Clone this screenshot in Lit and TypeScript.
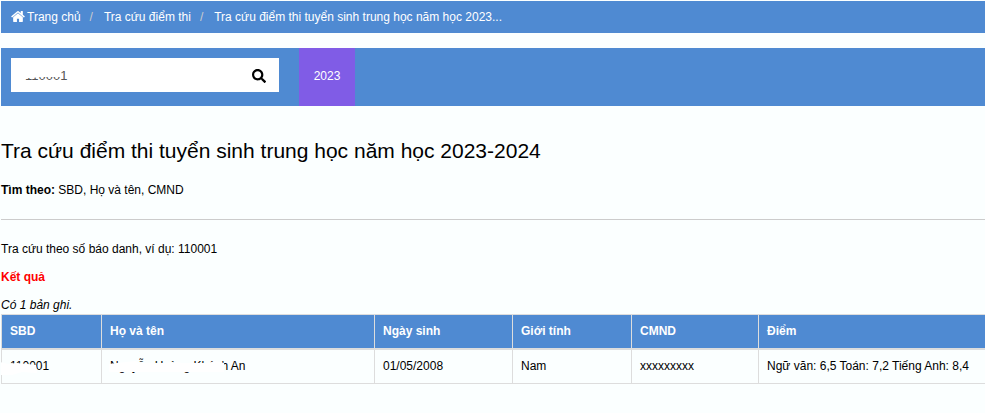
import { LitElement, html, css, svg } from 'lit';
import { customElement, property, state } from 'lit/decorators.js';

interface ICrumb {
    label: string;
    home?: boolean;
}

interface IRecord {
    id: string;
    name: string;
    birthday: string;
    gender: string;
    cmnd: string;
    score: string;
}

const homeIcon = svg`<path d="M1472 992v480q0 26-19 45t-45 19h-384v-384h-256v384h-384q-26 0-45-19t-19-45v-480q0-1 .5-3t.5-3l575-474 575 474q1 2 1 6zm223-69l-62 74q-8 9-21 11h-3q-13 0-21-7l-692-577-692 577q-12 8-24 7-13-2-21-11l-62-74q-8-10-7-23.5t11-21.5l719-599q32-26 76-26t76 26l244 204v-195q0-14 9-23t23-9h192q14 0 23 9t9 23v408l219 182q10 8 11 21.5t-7 23.5z" />`;

const searchIcon = svg`<path d="M505 442.7L405.3 343c-4.5-4.5-10.6-7-17-7H372c27.6-35.3 44-79.7 44-128C416 93.1 322.9 0 208 0S0 93.1 0 208s93.1 208 208 208c48.3 0 92.7-16.4 128-44v16.3c0 6.4 2.5 12.5 7 17l99.7 99.7c9.4 9.4 24.6 9.4 33.9 0l28.3-28.3c9.4-9.4 9.4-24.6.1-34zM208 336c-70.7 0-128-57.2-128-128 0-70.7 57.2-128 128-128 70.7 0 128 57.2 128 128 0 70.7-57.2 128-128 128z" />`;

@customElement('score-breadcrumb')
export class ScoreBreadcrumb extends LitElement {
    static override styles = css`
        :host {
            display: block;
            background: #4f8ad2;
        }
        .list {
            display: flex;
            margin: 0;
            padding: 8px 10px 7px;
            list-style: none;
            line-height: 17px;
        }
        .item + .item::before {
            content: '/';
            padding: 0 11px 0 9px;
            color: #ccc;
        }
        .link {
            color: #fff;
            text-decoration: none;
        }
        .icon {
            width: 14px;
            height: 11px;
            margin-right: 2px;
            vertical-align: -1px;
            fill: currentColor;
        }
    `;

    @property({ attribute: false }) crumbs: ICrumb[] = [];

    override render() {
        return html`
            <nav>
                <ol class="list">
                    ${this.crumbs.map(
                        (c) => html`<li class="item"><a class="link" href="#">${c.home
                            ? html`<svg class="icon" viewBox="64 256 1664 1280" aria-hidden="true">${homeIcon}</svg>`
                            : null}${c.label}</a></li>`,
                    )}
                </ol>
            </nav>
        `;
    }
}

@customElement('score-search')
export class ScoreSearch extends LitElement {
    static override styles = css`
        :host {
            display: flex;
            background: #4f8ad2;
        }
        .form {
            position: relative;
            display: flex;
            width: 268px;
            height: 34px;
            margin: 10px 20px 14px 10px;
            background: #fff;
        }
        .input {
            flex: 1;
            min-width: 0;
            padding: 1px 0 0 14px;
            border: 0;
            outline: 0;
            background: none;
            color: #555;
            font: 13px 'Liberation Sans', Arial, sans-serif;
        }
        .submit {
            display: flex;
            align-items: center;
            padding: 1px 13px 0;
            border: 0;
            background: none;
            color: #000;
        }
        .icon {
            width: 14px;
            height: 14px;
            fill: currentColor;
        }
        .smudge {
            position: absolute;
            top: 0;
            left: 0;
            width: 60px;
            height: 34px;
            fill: #fff;
            pointer-events: none;
        }
        .year {
            display: flex;
            align-items: center;
            justify-content: center;
            min-width: 56px;
            padding-bottom: 2px;
            background: #805ce6;
            color: #fff;
            text-decoration: none;
        }
    `;

    @property() query = '';

    @property() year = '';

    private _submitHandler(e: Event) {
        e.preventDefault();
    }

    override render() {
        return html`
            <form class="form" @submit=${this._submitHandler}>
                <input class="input" type="text" aria-label="SBD, Họ và tên, CMND" .value=${this.query} />
                <svg class="smudge" viewBox="0 0 60 34" aria-hidden="true">
                    <path d="M12 9H50V19H30L21 20L12 20Z" />
                </svg>
                <button class="submit" type="submit" aria-label="Tra cứu">
                    <svg class="icon" viewBox="0 0 512 512" aria-hidden="true">${searchIcon}</svg>
                </button>
            </form>
            <a class="year" href="#">${this.year}</a>
        `;
    }
}

@customElement('score-table')
export class ScoreTable extends LitElement {
    static override styles = css`
        :host {
            display: block;
            overflow: hidden;
        }
        .table {
            width: calc(100% + 2px);
            table-layout: fixed;
            border-collapse: collapse;
            line-height: 17px;
        }
        .id {
            width: 100px;
        }
        .name {
            width: 273px;
        }
        .birthday {
            width: 138px;
        }
        .gender {
            width: 119px;
        }
        .cmnd {
            width: 127px;
        }
        .head,
        .cell {
            padding: 8px;
            border: 1px solid #ddd;
            text-align: left;
            white-space: nowrap;
        }
        .head {
            border-bottom-width: 2px;
            background: #4f8ad2;
            color: #fff;
        }
        .covered {
            position: relative;
            display: inline-block;
        }
        .smudge {
            position: absolute;
            top: 0;
            left: -10px;
            width: 160px;
            height: 17px;
            fill: #fff;
        }
    `;

    @property({ attribute: false }) records: IRecord[] = [];

    override render() {
        return html`
            <table class="table">
                <colgroup>
                    <col class="id" />
                    <col class="name" />
                    <col class="birthday" />
                    <col class="gender" />
                    <col class="cmnd" />
                    <col />
                </colgroup>
                <thead>
                    <tr>
                        <th class="head" scope="col">SBD</th>
                        <th class="head" scope="col">Họ và tên</th>
                        <th class="head" scope="col">Ngày sinh</th>
                        <th class="head" scope="col">Giới tính</th>
                        <th class="head" scope="col">CMND</th>
                        <th class="head" scope="col">Điểm</th>
                    </tr>
                </thead>
                <tbody>
                    ${this.records.map(
                        (r) => html`
                            <tr>
                                <td class="cell">
                                    <span class="covered">${r.id}
                                        <svg class="smudge" viewBox="0 0 160 17" aria-hidden="true">
                                            <path d="M0 4L8 6L16 5L28 6L36 7L37 15L22 14L12 17H0Z" />
                                        </svg>
                                    </span>
                                </td>
                                <td class="cell">
                                    <span class="covered">${r.name}
                                        <svg class="smudge" viewBox="0 0 160 17" aria-hidden="true">
                                            <path d="M9 6L17 5L36 3L38 5H45L52 5H64L76 4L82 5H108L116 3L124 5L124 14H9Z" />
                                        </svg>
                                    </span>
                                </td>
                                <td class="cell">${r.birthday}</td>
                                <td class="cell">${r.gender}</td>
                                <td class="cell">${r.cmnd}</td>
                                <td class="cell">${r.score}</td>
                            </tr>
                        `,
                    )}
                </tbody>
            </table>
        `;
    }
}

@customElement('app-root')
export class AppRoot extends LitElement {
    static override styles = css`
        :host {
            display: block;
            box-sizing: border-box;
            min-height: 100vh;
            padding: 1px 0 0 1px;
            background: #fbffff;
            color: #000;
            font: 12px/17px 'Liberation Sans', Arial, sans-serif;
        }
        .search {
            margin-top: 15px;
        }
        .title {
            margin: 33px 0 19px;
            font-size: 21px;
            font-weight: normal;
            line-height: 24px;
        }
        .text {
            margin: 0 0 11px;
        }
        .rule {
            margin: 20px 0 21px;
            border: 0;
            border-top: 1px solid #ccc;
        }
        .result {
            color: #f00;
            font-weight: bold;
        }
        .count {
            margin: 0;
            font-style: italic;
        }
    `;

    @state() private _crumbs: ICrumb[] = [
        { label: 'Trang chủ', home: true },
        { label: 'Tra cứu điểm thi' },
        { label: 'Tra cứu điểm thi tuyển sinh trung học năm học 2023...' },
    ];

    @state() private _records: IRecord[] = [
        {
            id: '110001',
            name: 'Nguyễn Hoàng Khánh An',
            birthday: '01/05/2008',
            gender: 'Nam',
            cmnd: 'xxxxxxxxx',
            score: 'Ngữ văn: 6,5 Toán: 7,2 Tiếng Anh: 8,4',
        },
    ];

    override render() {
        return html`
            <score-breadcrumb .crumbs=${this._crumbs}></score-breadcrumb>
            <score-search class="search" query="110001" year="2023"></score-search>
            <main>
                <h1 class="title">Tra cứu điểm thi tuyển sinh trung học năm học 2023-2024</h1>
                <p class="text"><strong>Tìm theo:</strong> SBD, Họ và tên, CMND</p>
                <hr class="rule" />
                <p class="text">Tra cứu theo số báo danh, ví dụ: 110001</p>
                <p class="text result">Kết quả</p>
                <p class="count">Có ${this._records.length} bản ghi.</p>
                <score-table .records=${this._records}></score-table>
            </main>
        `;
    }
}
